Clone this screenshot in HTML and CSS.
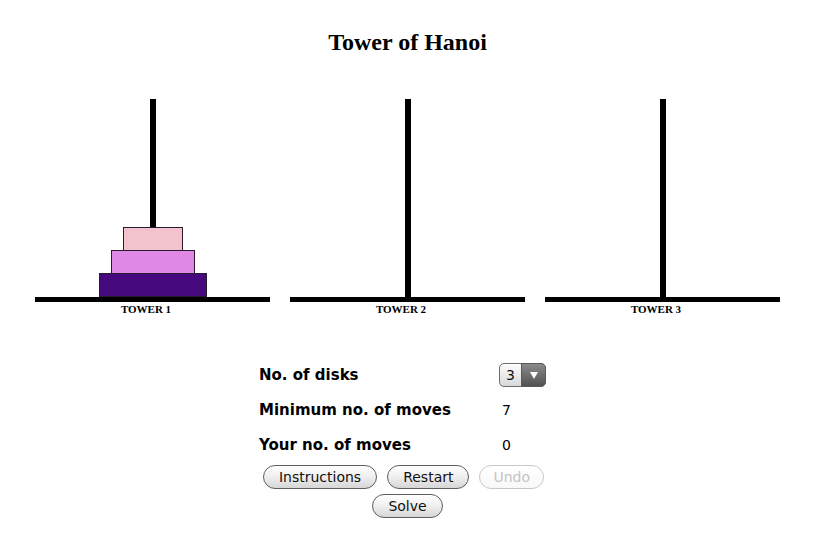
FILE: index.html
```html
<!DOCTYPE html>
<html lang="en">
<head>
    <meta charset="UTF-8">
    <meta name="viewport" content="width=device-width, initial-scale=1.0">
    <title>Tower of Hanoi</title>
    <link rel="stylesheet" href="styles.css">
</head>
<body>
    <div class="page">
        <h1>Tower of Hanoi</h1>

        <div class="towers">
            <div class="tower">
                <div class="stack">
                    <div class="disk disk-1"></div>
                    <div class="disk disk-2"></div>
                    <div class="disk disk-3"></div>
                </div>
                <div class="base"></div>
                <div class="tower-label">TOWER 1</div>
            </div>
            <div class="tower">
                <div class="stack"></div>
                <div class="base"></div>
                <div class="tower-label">TOWER 2</div>
            </div>
            <div class="tower">
                <div class="stack"></div>
                <div class="base"></div>
                <div class="tower-label">TOWER 3</div>
            </div>
        </div>

        <div class="stats">
            <div class="stat-label">No. of disks</div>
            <div class="stat-value">
                <div class="select">
                    <select id="disk-count">
                        <option>3</option>
                        <option>4</option>
                        <option>5</option>
                        <option>6</option>
                        <option>7</option>
                        <option>8</option>
                    </select>
                </div>
            </div>
            <div class="stat-label">Minimum no. of moves</div>
            <div class="stat-value"><span class="num">7</span></div>
            <div class="stat-label">Your no. of moves</div>
            <div class="stat-value"><span class="num">0</span></div>
        </div>

        <div class="buttons first-row">
            <button>Instructions</button>
            <button>Restart</button>
            <button disabled>Undo</button>
        </div>
        <div class="buttons">
            <button>Solve</button>
        </div>
    </div>
</body>
</html>
```

FILE: styles.css
```css
body {
    margin: 0;
    padding: 0;
    background: #fff;
    color: #000;
}

.page {
    width: 815px;
    padding-top: 28px;
}

h1 {
    margin: 0;
    font-family: "Liberation Serif", "Times New Roman", serif;
    font-size: 24px;
    line-height: 28px;
    font-weight: bold;
    text-align: center;
}

.towers {
    display: flex;
    justify-content: center;
    gap: 20px;
    margin-top: 43px;
}

.tower {
    width: 235px;
    display: flex;
    flex-direction: column;
}

.stack {
    height: 198px;
    display: flex;
    flex-direction: column;
    justify-content: flex-end;
    align-items: center;
    background: linear-gradient(#000, #000) 115px 0 / 6px 100% no-repeat;
}

.disk {
    height: 24px;
    box-sizing: border-box;
    border: 1px solid #2a1a30;
    margin-top: -1px;
}

.disk-1 {
    width: 60px;
    background: #f4c2cc;
}

.disk-2 {
    width: 84px;
    background: #df88e6;
}

.disk-3 {
    width: 108px;
    background: #470a7e;
}

.base {
    height: 5px;
    background: #000;
}

.tower-label {
    margin-top: 1px;
    padding-right: 13px;
    font-family: "Liberation Serif", "Times New Roman", serif;
    font-size: 11px;
    line-height: 12px;
    font-weight: bold;
    text-align: center;
}

.stats {
    display: grid;
    grid-template-columns: 240px 60px;
    grid-auto-rows: 35px;
    align-items: center;
    margin: 42px 0 0 259px;
    width: 300px;
    font-family: "DejaVu Sans", Verdana, sans-serif;
}

.stat-label {
    font-size: 15px;
    font-weight: bold;
}

.num {
    padding-left: 3px;
    font-size: 14px;
}

.select {
    position: relative;
    width: 47px;
    height: 24px;
}

.select select {
    appearance: none;
    -webkit-appearance: none;
    width: 47px;
    height: 24px;
    margin: 0;
    padding: 0 0 0 6px;
    border: 1px solid #6c6c6c;
    border-radius: 5px;
    background: linear-gradient(#fdfdfd, #d9d9d9);
    font-family: "DejaVu Sans", Verdana, sans-serif;
    font-size: 14px;
    color: #111;
    outline: none;
}

.select::after {
    content: "";
    position: absolute;
    top: 0;
    right: 0;
    width: 25px;
    height: 24px;
    box-sizing: border-box;
    border: 1px solid #5a5a5a;
    border-radius: 0 5px 5px 0;
    background: linear-gradient(#8a8a8a, #525252);
    pointer-events: none;
}

.select::before {
    content: "";
    position: absolute;
    top: 9px;
    right: 8px;
    border-left: 4px solid transparent;
    border-right: 4px solid transparent;
    border-top: 7px solid #fff;
    z-index: 1;
    pointer-events: none;
}

.buttons {
    display: flex;
    justify-content: center;
    gap: 10px;
    margin-top: 5px;
}

.first-row {
    margin-top: 3px;
    padding-right: 8px;
}

button {
    height: 24px;
    padding: 0 15px;
    border: 1px solid #5e5e5e;
    border-radius: 12px;
    background: linear-gradient(#ffffff, #f1f1f1 45%, #d6d6d6);
    font-family: "DejaVu Sans", Verdana, sans-serif;
    font-size: 14px;
    line-height: 22px;
    color: #111;
    cursor: pointer;
}

button:disabled {
    padding: 0 13px;
    border-color: #c8c8c8;
    background: linear-gradient(#ffffff, #f8f8f8);
    color: #c4c4c4;
    cursor: default;
}
```
